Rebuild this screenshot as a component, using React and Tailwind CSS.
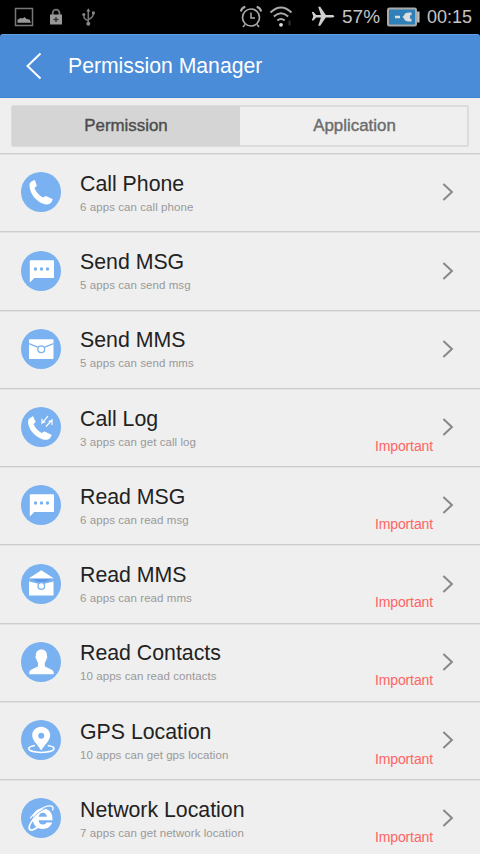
const permissions = [
  { icon: 'phone', title: 'Call Phone', detail: '6 apps can call phone' },
  { icon: 'message', title: 'Send MSG', detail: '5 apps can send msg' },
  { icon: 'mail', title: 'Send MMS', detail: '5 apps can send mms' },
  { icon: 'callLog', title: 'Call Log', detail: '3 apps can get call log', important: true },
  { icon: 'message', title: 'Read MSG', detail: '6 apps can read msg', important: true },
  { icon: 'mailOpen', title: 'Read MMS', detail: '6 apps can read mms', important: true },
  { icon: 'contact', title: 'Read Contacts', detail: '10 apps can read contacts', important: true },
  { icon: 'gps', title: 'GPS Location', detail: '10 apps can get gps location', important: true },
  { icon: 'network', title: 'Network Location', detail: '7 apps can get network location', important: true }
]

// Glyphs are drawn in a 40x40 box that already holds the blue disc
const glyphs = {
  phone: (
    <path d="M9.5 10.2 13 8q.7-.3 1 .4l1.7 4.8q.2.7-.5 1.2l-1.700 1.500c1.500 4 4.600 7.400 8.500 9.600l2.200-1.200q.7-.4 1.300 0l6.300 3-1 2.300c-1.500 3-5.200 3.700-9.200 2C15 28.800 9.500 22.500 8.500 14.500q-.3-2.800 1-4.300z" fill="#fff" />
  ),
  message: (
    <>
      <path d="M9.500 9.200h22.800q.7 0 .7.700v16.500q0 .7-.7.700H13.300L8.800 31.600V9.900q0-.7.700-.7z" fill="#fff" />
      <g fill="#7ab1f0">
        <circle cx="14.500" cy="18" r="1.700" />
        <circle cx="20.500" cy="18" r="1.700" />
        <circle cx="26.500" cy="18" r="1.700" />
      </g>
    </>
  ),
  mail: (
    <>
      <rect x="8" y="10.300" width="24.500" height="19.700" rx="0.800" fill="#fff" />
      <path d="M8 14.600 16.800 18.100M32.500 14.600 23.700 18.100" stroke="#7ab1f0" strokeWidth="1.200" />
      <circle cx="20.250" cy="20.300" r="3.400" fill="#fff" stroke="#7ab1f0" strokeWidth="1.300" />
    </>
  ),
  callLog: (
    <>
      <path d="M8 11.700 11.400 9.500q.8-.4 1.100.4l2 4.700q.2.700-.5 1.200l-1.500 1.300c1.600 4.100 4.600 7 8.200 8.900l2.200-1.200q.7-.4 1.300 0l6.600 3.200-1.200 2.200c-1.700 2.900-5.200 3.300-9 1.800C13.600 29.200 8.100 23 7.100 16q-.3-2.700.9-4.300z" fill="#fff" />
      <path d="m27 9.200-6 7v-4.500M21.200 16l3.200-1.300M25 19.500l6-6.500v5M31 13.200l-3.400 1.300" fill="none" stroke="#fff" strokeWidth="1.200" />
    </>
  ),
  mailOpen: (
    <>
      <path d="M20.300 6.200 33 14.500H7.600zM8 16h24.500v15.400H8z" fill="#fff" />
      <path d="M7.500 14.800h25.700v2.400l-8.700 2.300h-8.500l-8.500-2.300z" fill="#7ab1f0" />
      <path d="M11 15.200h18.600l-5.300 2.500h-8z" fill="#5b99e5" />
      <circle cx="20.300" cy="22" r="3.300" fill="#fff" stroke="#7ab1f0" strokeWidth="1.300" />
    </>
  ),
  contact: (
    <path d="M20.400 7.500c3.600 0 5.600 2.200 5.500 6.200.7.500.4 2.700-.4 3.400-.3 1.600-.9 2.800-1.700 3.700v3.200c.6 2 8.100 2.500 8.900 6.300.1.900-.1 1.700-.3 2H8.400c-.3-.5-.4-1.200-.2-2 .8-3.800 8.100-4.300 8.800-6.300v-3.200c-.8-.9-1.400-2.100-1.700-3.700-.8-.7-1.100-2.900-.4-3.400-.1-4 1.900-6.200 5.500-6.200z" fill="#fff" />
  ),
  gps: (
    <>
      <path d="M14 25.500c-4 .6-6.300 1.700-6.300 3.100 0 2.200 5.600 3.800 12.700 3.800s12.700-1.600 12.700-3.800c0-1.400-2.300-2.500-6.300-3.100" fill="none" stroke="#fff" strokeWidth="1.500" />
      <path d="M20.200 6.700c5 0 9 3.800 9 8.600 0 5.300-5.700 9.500-9 15.200-3.300-5.700-9-9.900-9-15.200 0-4.800 4-8.600 9-8.600zm0 6a3 3 0 1 0 0 6 3 3 0 0 0 0-6z" fill="#fff" fillRule="evenodd" />
    </>
  ),
  network: (
    <>
      <path
        d="M21.800 10.500c5.800 0 9.700 4.100 9.700 10.200v1.500H17.600c.2 2.800 1.900 4.400 4.300 4.400 1.700 0 2.800-.7 3.500-2.100h5.700c-1.200 4-4.700 6.400-9.300 6.400-6 0-10-4-10-10.200s4-10.200 10-10.200zM17.700 18.700h8.200c-.3-2.500-1.800-3.900-4-3.900s-3.800 1.400-4.200 3.900z"
        fill="#fff"
        fillRule="evenodd"
      />
      <path d="M9.200 20.300c3.800-5.300 9-9.300 14.500-11.300 4-1.500 8-1.700 8.300.8.1.9-.1 1.800-.5 2.800" fill="none" stroke="#fff" strokeWidth="1.300" />
      <path d="M13 20.500c-4 4.500-6 9.300-4.200 11 1.500 1.300 5-.2 8.500-3" fill="none" stroke="#fff" strokeWidth="1.700" />
      <path d="M11.500 20.500c3.500-4.500 8-8 13-10" stroke="#7ab1f0" strokeWidth="0.800" fill="none" />
    </>
  )
}

function PermissionIcon({ name }) {
  return (
    <svg className="h-10 w-10 shrink-0" viewBox="0 0 40 40">
      <circle cx="20" cy="20" r="20" fill="#7ab1f0" />
      {glyphs[name]}
    </svg>
  )
}

function StatusBar() {
  return (
    <div className="flex h-[34px] shrink-0 items-center bg-black pr-2 pl-[14px] text-[#c4c4c4]">
      <svg className="h-[34px] w-[86px]" viewBox="14 0 86 34" fill="none" stroke="#777">
        <rect x="15.500" y="8.500" width="17" height="17" strokeWidth="1.500" />
        <path d="M17.500 22.800v-3l3-1.800 2 .5 2-1.500 2 2 3 .5 1.500 3.300z" fill="#999" stroke="none" />
        <path d="M52.700 15v-2a3.400 3.400 0 0 1 6.800 0v2" strokeWidth="1.800" />
        <rect x="50" y="14.500" width="12" height="10" fill="#999" stroke="none" />
        <path d="M56 17v5M53.500 19.500h5" stroke="#333" strokeWidth="1.300" />
        <path d="M88.300 10v14M88.300 21c-3-1.500-4.500-2.200-4.500-6M88.300 19.500c3.500-1.300 5-2.500 5-6" strokeWidth="1.500" />
        <g fill="#888" stroke="none">
          <path d="m88.300 8.200 2 3.200h-4z" />
          <circle cx="88.300" cy="23.800" r="2" />
          <circle cx="83.800" cy="14.500" r="1.500" />
          <path d="M92 11.500h2.800v2.800H92z" />
        </g>
      </svg>
      <svg className="ml-auto h-[34px] w-[98px]" viewBox="238 0 98 34" fill="none" stroke="#aaa">
        <circle cx="251" cy="17.500" r="8.500" strokeWidth="1.700" />
        <path d="M251 12.500v5.500h4M245 24.500l-2 2.500M257 24.500l2 2.500" strokeWidth="1.500" />
        <path d="M240.800 11.500q.7-3.500 4.500-4.700M261.200 11.500q-.7-3.500-4.500-4.700" strokeWidth="2" />
        <path d="M270.500 12.500q10.500-10 21 0M273.800 16.500q7.200-6.500 14.400 0M277.300 20.500q3.700-3 7.400 0" strokeWidth="2" />
        <circle cx="281" cy="24.800" r="1.900" fill="#ddd" stroke="none" />
        <path d="M289.500 20.500v5" stroke="#333" strokeWidth="2" />
        <path d="M334.500 16.300c-.5-.9-1.500-1.200-3-1.200h-5.700l-5.600-8.300h-2l2.700 8.300h-4.700l-2.700-3h-1.700l1.500 4.200-1.500 4.200h1.700l2.700-3h4.700l-2.700 8.300h2l5.600-8.300h5.700c1.500 0 2.500-.3 3-1.200z" fill="#d0d0d0" stroke="none" />
      </svg>
      <span className="-mt-px ml-[6px] w-[39px] text-[19px] leading-none whitespace-nowrap">57%</span>
      <svg className="ml-[6px] h-[20px] w-[33px]" viewBox="0 0 33 20">
        <rect x="1" y="1.500" width="28" height="17" rx="1.500" fill="#2f7fb8" stroke="#aaa" strokeWidth="2" />
        <path d="M31.300 4.500v11" stroke="#bbb" strokeWidth="2.500" />
        <path d="M8 10h5" stroke="#ddd" strokeWidth="2.500" />
        <path d="M22 5.500h2.500v2.800H22.500v3.400h2v2.800H22c-3 0-4.500-1-5-3l-1.500-1.500L17 8.500c.5-2 2-3 5-3z" fill="#ddd" />
        <path d="M18 8h5v4h-5z" fill="#ddd" />
      </svg>
      <span className="-mt-px ml-[7px] w-[45px] text-[18px] leading-none whitespace-nowrap">00:15</span>
    </div>
  )
}

function Header() {
  return (
    <div className="bg-black">
      <header className="flex h-16 items-center rounded-t-[3px] border-t border-b border-t-[#5f9fe4] border-b-[#4285d2] bg-[#4a8cd7] pl-[26px] text-white">
        <svg className="h-7 w-4" viewBox="0 0 16 28" fill="none" stroke="#fff" strokeWidth="2">
          <path d="M14.500 1.500 1.500 14l13 12.500" />
        </svg>
        <h1 className="ml-[26px] text-[21.200px] leading-none">Permission Manager</h1>
      </header>
    </div>
  )
}

function Tabs() {
  return (
    <div className="flex h-[56px] shrink-0 border-b border-[#cdcdcd] px-[11px] pt-[7px] pb-[6px]">
      <div className="flex flex-1 rounded-xs border-2 border-[#dcdcdc] text-[16.900px] [-webkit-text-stroke:0.4px]">
        <button className="-m-px w-[228px] rounded-l-xs bg-[#d5d5d5] text-[#4c4c4c]">Permission</button>
        <button className="flex-1 pl-[3px] text-[#6c6c6c]">Application</button>
      </div>
    </div>
  )
}

function PermissionRow({ item }) {
  return (
    <li className="flex h-[78.250px] shrink-0 items-center border-t border-b border-t-[#e2e2e2] border-b-[#cdcdcd] pr-[26px] pb-[1.500px] pl-[21px]">
      <PermissionIcon name={item.icon} />
      <div className="ml-[19px] flex-1 pt-px">
        <div className="text-[21.300px] leading-[26px] text-[#222]">{item.title}</div>
        <div className="mt-[2px] text-[11.500px] leading-[16px] tracking-[0.070px] text-[#999]">{item.detail}</div>
      </div>
      {item.important && (
        <span className="mt-[37px] mr-[9px] text-[14px] leading-4 tracking-[-0.120px] text-[#ff6464]">Important</span>
      )}
      <svg className="h-[18px] w-3" viewBox="0 0 12 18" fill="none" stroke="#888" strokeWidth="2">
        <path d="m1.400 1 8.500 8-8.500 8" />
      </svg>
    </li>
  )
}

export default function App() {
  return (
    <div className="flex h-[854px] w-[480px] flex-col overflow-hidden bg-[#efefef] font-['Liberation_Sans',Arial,sans-serif]">
      <StatusBar />
      <Header />
      <Tabs />
      <ul className="flex flex-col">
        {permissions.map(item => (
          <PermissionRow key={item.title} item={item} />
        ))}
      </ul>
    </div>
  )
}
